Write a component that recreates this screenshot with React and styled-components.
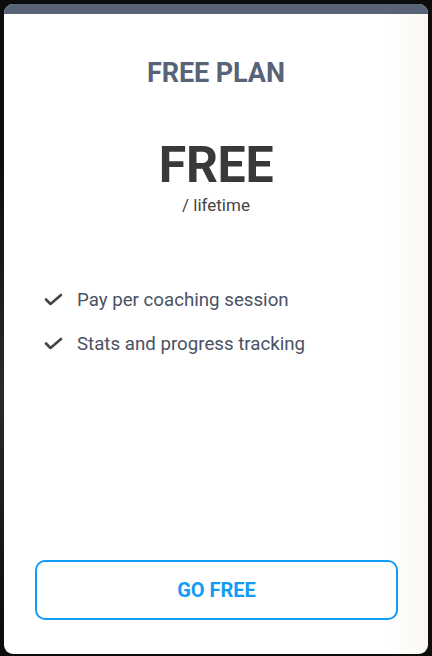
import React from 'react';
import styled, { createGlobalStyle } from 'styled-components';

const GlobalStyle = createGlobalStyle`
  html, body {
    margin: 0;
    padding: 0;
    background: #0d0d0d;
  }
  body {
    font-family: Roboto, "Liberation Sans", sans-serif;
  }
`;

const Page = styled.div`
  width: 432px;
  height: 656px;
  padding: 4px 4px 2px;
  box-sizing: border-box;
  background: radial-gradient(circle at 0% 60%, #2a2a2a 0%, #0d0d0d 40%);
`;

const Card = styled.div`
  height: 100%;
  display: flex;
  flex-direction: column;
  border-radius: 9px;
  overflow: hidden;
  background: linear-gradient(to right, #ffffff 0%, #ffffff 90%, #fbf8f3 100%);
`;

const TopBar = styled.div`
  height: 10px;
  background: #596378;
  flex-shrink: 0;
`;

const PlanName = styled.h2`
  margin: 43px 0 0;
  text-align: center;
  font-size: 27px;
  font-weight: 700;
  color: #596378;
  letter-spacing: -0.1px;
  line-height: 32px;
`;

const Price = styled.div`
  margin-top: 51px;
  text-align: center;
  font-size: 50px;
  font-weight: 700;
  color: #393939;
  line-height: 50px;
  letter-spacing: -0.3px;
`;

const Period = styled.div`
  text-align: center;
  font-size: 17px;
  color: #444444;
  line-height: 20px;
  margin-top: 5px;
`;

const Features = styled.ul`
  list-style: none;
  margin: 72px 0 0;
  padding: 0 0 0 40px;
  display: flex;
  flex-direction: column;
  gap: 18px;
`;

const Feature = styled.li`
  display: flex;
  align-items: center;
  gap: 14px;
  font-size: 18.7px;
  color: #4a5263;
  line-height: 26px;
`;

const Spacer = styled.div`
  flex: 1;
`;

const Button = styled.button`
  margin: 0 30px 34px 31px;
  height: 60px;
  border: 2px solid #109cf7;
  border-radius: 10px;
  background: transparent;
  color: #109cf7;
  font-family: Roboto, "Liberation Sans", sans-serif;
  font-size: 20px;
  font-weight: 700;
  cursor: pointer;
`;

const Check = () => (
  <svg width="19" height="14" viewBox="0 0 19 14" fill="none">
    <polyline
      points="2,6.5 6.5,11 17,2"
      stroke="#454545"
      strokeWidth="2.6"
      strokeLinecap="round"
      strokeLinejoin="round"
    />
  </svg>
);

const features = ['Pay per coaching session', 'Stats and progress tracking'];

export default function App() {
  return (
    <>
      <GlobalStyle />
      <Page>
        <Card>
          <TopBar />
          <PlanName>FREE PLAN</PlanName>
          <Price>FREE</Price>
          <Period>/ lifetime</Period>
          <Features>
            {features.map((f) => (
              <Feature key={f}>
                <Check />
                {f}
              </Feature>
            ))}
          </Features>
          <Spacer />
          <Button>GO FREE</Button>
        </Card>
      </Page>
    </>
  );
}
